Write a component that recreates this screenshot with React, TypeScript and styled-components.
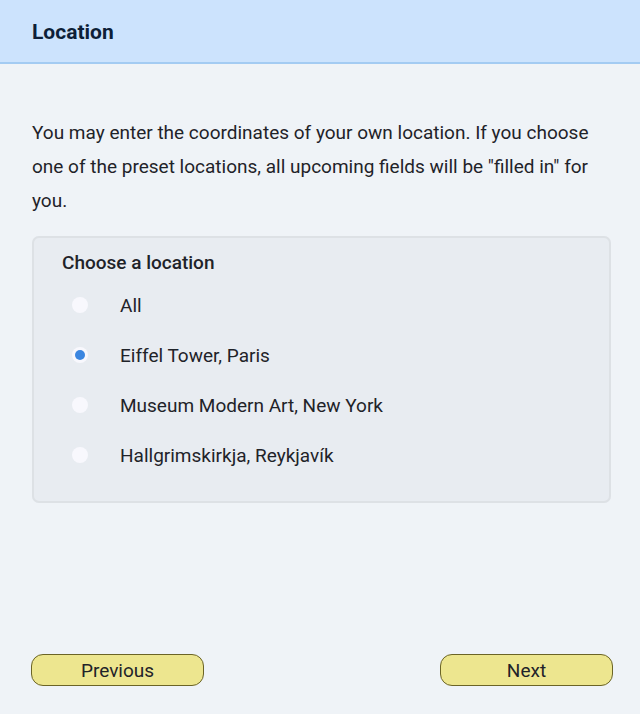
import React, { useState } from "react";
import styled, { createGlobalStyle } from "styled-components";

const Global = createGlobalStyle`
  html, body { margin: 0; padding: 0; }
  body {
    background: #eff3f7;
    font-family: Roboto, "Noto Sans", sans-serif;
    color: #1f2329;
  }
`;

const Page = styled.div`
  min-height: 714px;
  display: flex;
  flex-direction: column;
  box-sizing: border-box;
`;

const Header = styled.header`
  height: 62px;
  background: #cce3fd;
  border-bottom: 2px solid #a3cbf2;
  display: flex;
  align-items: center;
  padding-left: 32px;
`;

const Title = styled.h1`
  margin: 2px 0 0;
  font-size: 21px;
  font-weight: 700;
  color: #0d1f38;
`;

const Main = styled.main`
  flex: 1;
  display: flex;
  flex-direction: column;
  padding: 52px 27px 28px 32px;
`;

const Intro = styled.p`
  margin: 0 2px 0 0;
  font-size: 19px;
  line-height: 34px;
  color: #1f2329;
`;

const Group = styled.fieldset`
  margin: 18px 2px 0 0;
  padding: 0 0 21px 28px;
  border: 2px solid #dde1e5;
  border-radius: 7px;
  background: #e8ecf1;
  min-width: 0;
`;

const Legend = styled.div`
  font-size: 19px;
  font-weight: 500;
  height: 36px;
  padding-top: 6px;
  display: flex;
  align-items: center;
  color: #1f2329;
`;

const Option = styled.label`
  display: flex;
  align-items: center;
  height: 50px;
  font-size: 19px;
  cursor: pointer;
  color: #1f2329;
`;

const Radio = styled.span<{ $checked: boolean }>`
  width: 16px;
  height: 16px;
  border-radius: 50%;
  background: #f8f8fd;
  margin-left: 10px;
  margin-right: 32px;
  display: flex;
  align-items: center;
  justify-content: center;
  flex-shrink: 0;
  &::after {
    content: "";
    width: 10px;
    height: 10px;
    border-radius: 50%;
    background: #3b86e0;
    display: ${(p) => (p.$checked ? "block" : "none")};
  }
`;

const Footer = styled.div`
  margin-top: auto;
  display: flex;
  justify-content: space-between;
`;

const NavButton = styled.button`
  width: 173px;
  height: 32px;
  margin-left: -1px;
  border: 1px solid #6b6426;
  border-radius: 12px;
  background: #ede68f;
  font-family: Roboto, "Noto Sans", sans-serif;
  font-size: 19px;
  color: #1f2329;
  cursor: pointer;
  padding: 0;
`;

const options = [
  "All",
  "Eiffel Tower, Paris",
  "Museum Modern Art, New York",
  "Hallgrimskirkja, Reykjavík",
];

export default function App() {
  const [selected, setSelected] = useState(1);
  return (
    <Page>
      <Global />
      <Header>
        <Title>Location</Title>
      </Header>
      <Main>
        <Intro>
          You may enter the coordinates of your own location. If you choose one
          of the preset locations, all upcoming fields will be "filled in" for
          you.
        </Intro>
        <Group>
          <Legend>Choose a location</Legend>
          {options.map((o, i) => (
            <Option key={o} onClick={() => setSelected(i)}>
              <Radio $checked={selected === i} />
              {o}
            </Option>
          ))}
        </Group>
        <Footer>
          <NavButton>Previous</NavButton>
          <NavButton>Next</NavButton>
        </Footer>
      </Main>
    </Page>
  );
}
